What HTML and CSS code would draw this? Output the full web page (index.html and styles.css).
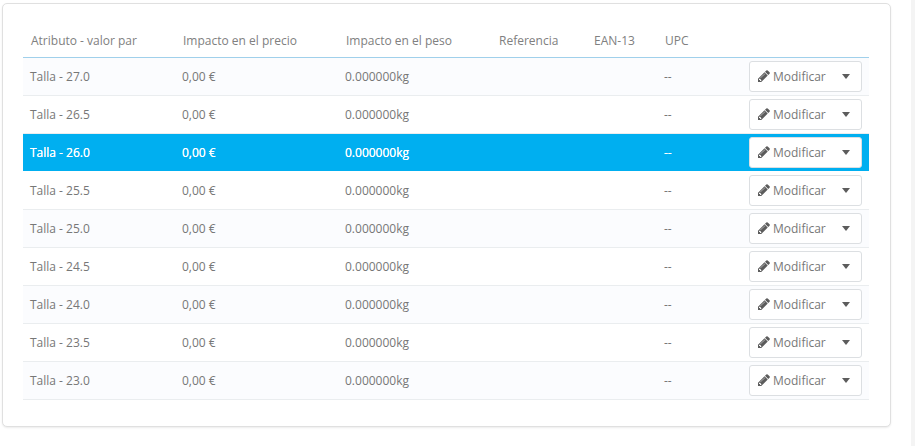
FILE: index.html
```html
<!DOCTYPE html>
<html lang="es">
<head>
<meta charset="utf-8">
<title>Combinaciones</title>
<link rel="stylesheet" href="styles.css">
</head>
<body>
<svg class="defs" width="0" height="0" aria-hidden="true"><symbol id="pencil" viewBox="0 0 1792 1792"><path d="M491 1536l91-91-235-235-91 91v107h128v128h107zm523-928q0-22-22-22-10 0-17 7l-542 542q-7 7-7 17 0 22 22 22 10 0 17-7l542-542q7-7 7-17zm-54-192l416 416-832 832h-416v-416zm683 96q0 53-37 90l-166 166-416-416 166-165q36-38 90-38 53 0 91 38l235 234q37 39 37 91z"/></symbol></svg>
<div class="panel">
<table class="grid">
<thead>
<tr><th class="c1">Atributo - valor par</th><th class="c2">Impacto en el precio</th><th class="c3">Impacto en el peso</th><th class="c4">Referencia</th><th class="c5">EAN-13</th><th class="c6">UPC</th><th class="c7"></th></tr>
</thead>
<tbody>
<tr class="odd"><td>Talla - 27.0</td><td>0,00 €</td><td>0.000000kg</td><td></td><td></td><td>--</td><td class="act"><div class="btn"><svg class="pencil"><use href="#pencil"/></svg><span class="lbl">Modificar</span><span class="caret"></span></div></td></tr>
<tr><td>Talla - 26.5</td><td>0,00 €</td><td>0.000000kg</td><td></td><td></td><td>--</td><td class="act"><div class="btn"><svg class="pencil"><use href="#pencil"/></svg><span class="lbl">Modificar</span><span class="caret"></span></div></td></tr>
<tr class="sel"><td>Talla - 26.0</td><td>0,00 €</td><td>0.000000kg</td><td></td><td></td><td>--</td><td class="act"><div class="btn"><svg class="pencil"><use href="#pencil"/></svg><span class="lbl">Modificar</span><span class="caret"></span></div></td></tr>
<tr><td>Talla - 25.5</td><td>0,00 €</td><td>0.000000kg</td><td></td><td></td><td>--</td><td class="act"><div class="btn"><svg class="pencil"><use href="#pencil"/></svg><span class="lbl">Modificar</span><span class="caret"></span></div></td></tr>
<tr class="odd"><td>Talla - 25.0</td><td>0,00 €</td><td>0.000000kg</td><td></td><td></td><td>--</td><td class="act"><div class="btn"><svg class="pencil"><use href="#pencil"/></svg><span class="lbl">Modificar</span><span class="caret"></span></div></td></tr>
<tr><td>Talla - 24.5</td><td>0,00 €</td><td>0.000000kg</td><td></td><td></td><td>--</td><td class="act"><div class="btn"><svg class="pencil"><use href="#pencil"/></svg><span class="lbl">Modificar</span><span class="caret"></span></div></td></tr>
<tr class="odd"><td>Talla - 24.0</td><td>0,00 €</td><td>0.000000kg</td><td></td><td></td><td>--</td><td class="act"><div class="btn"><svg class="pencil"><use href="#pencil"/></svg><span class="lbl">Modificar</span><span class="caret"></span></div></td></tr>
<tr><td>Talla - 23.5</td><td>0,00 €</td><td>0.000000kg</td><td></td><td></td><td>--</td><td class="act"><div class="btn"><svg class="pencil"><use href="#pencil"/></svg><span class="lbl">Modificar</span><span class="caret"></span></div></td></tr>
<tr class="odd"><td>Talla - 23.0</td><td>0,00 €</td><td>0.000000kg</td><td></td><td></td><td>--</td><td class="act"><div class="btn"><svg class="pencil"><use href="#pencil"/></svg><span class="lbl">Modificar</span><span class="caret"></span></div></td></tr>
</tbody>
</table>
</div>
<div class="strip"></div>
</body>
</html>
```
FILE: styles.css
```css
html, body { margin: 0; height: 446px; overflow: hidden; background: #fff; }
body { display: flex; align-items: flex-start; justify-content: space-between; padding: 3px 0 0 2px; box-sizing: border-box; font-family: "Open Sans", sans-serif; font-size: 12px; color: #777; }
.defs { position: absolute; }
.panel { box-sizing: border-box; flex: none; width: 889px; height: 424px; padding: 20px 20px 0; background: #fff; border: 1px solid #e0e0e0; border-radius: 5px; box-shadow: 0 1px 2px rgba(0,0,0,.08); }
.strip { flex: none; width: 4px; height: 446px; margin-top: -3px; background: #f4f4f4; }
.grid { width: 846px; border-collapse: collapse; table-layout: fixed; }
th { height: 33px; padding: 0 0 0 8px; box-sizing: border-box; text-align: left; font-weight: 400; color: #808080; border-bottom: 1px solid #a0d0eb; white-space: nowrap; }
.c1 { width: 152px; } .c2 { width: 163px; } .c3 { width: 153px; } .c4 { width: 95px; } .c5 { width: 71px; } .c6 { width: 84px; } .c7 { width: 128px; }
td { height: 38px; padding: 0 0 0 7px; box-sizing: border-box; border-bottom: 1px solid #eaedef; white-space: nowrap; }
.odd td { background: #fbfcfe; }
.sel td { background: #00aff0; color: #fff; text-shadow: 0 0 .6px #fff; border-bottom-color: #fff; }
td.act { padding: 0 7px 0 0; }
.btn { display: flex; align-items: center; box-sizing: border-box; width: 113px; height: 31px; margin-left: auto; padding-left: 7px; background: #fff; border: 1px solid #dcdfe2; border-radius: 3px; color: #777; text-shadow: none; }
.pencil { width: 14px; height: 14px; fill: #5c5c5c; flex: none; }
.lbl { margin-left: 2px; }
.caret { margin-left: auto; margin-right: 11px; width: 0; height: 0; border-left: 4.5px solid transparent; border-right: 4.5px solid transparent; border-top: 5px solid #5c5c5c; }
```
